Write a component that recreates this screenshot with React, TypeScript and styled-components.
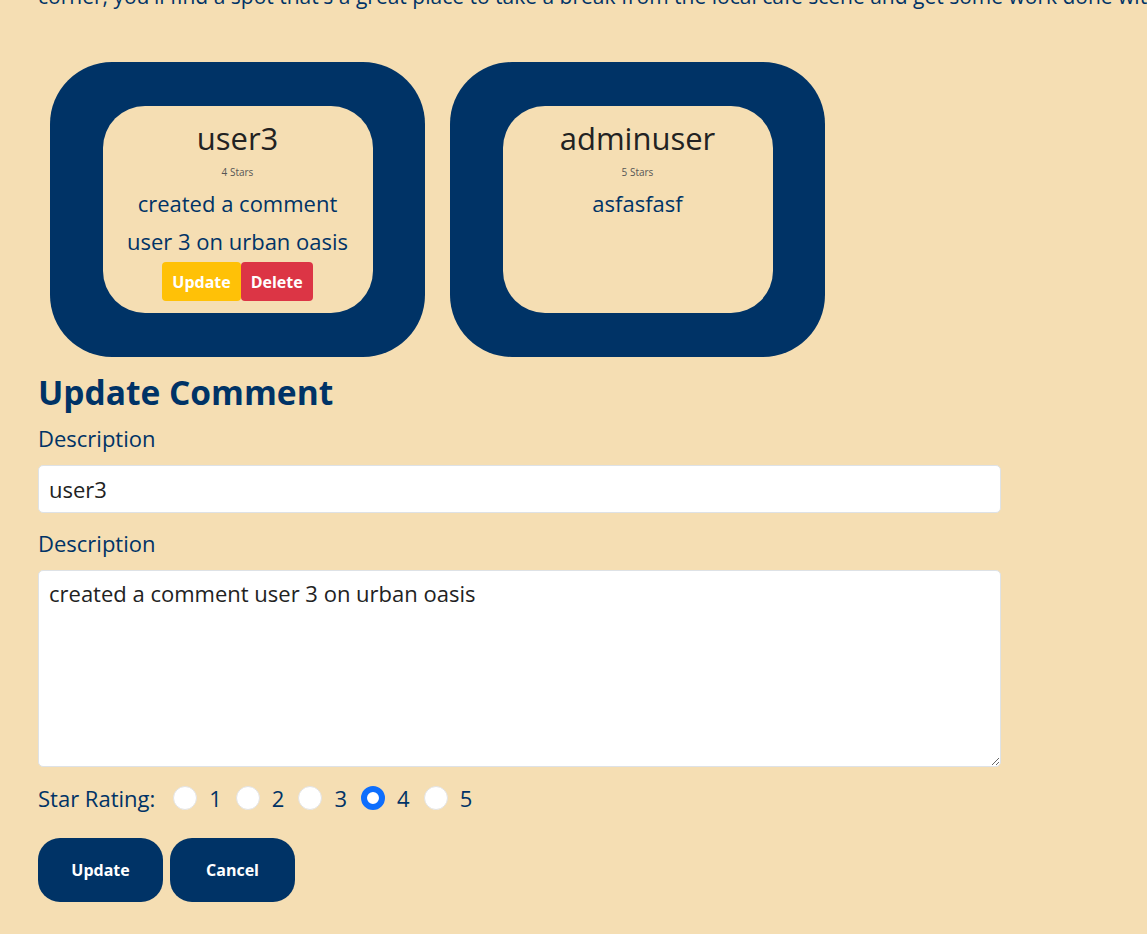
import React, { useState } from "react";
import styled, { createGlobalStyle } from "styled-components";

const GlobalStyle = createGlobalStyle`
  html, body { margin: 0; padding: 0; background: #f5deb3; }
  body { font-family: "Open Sans", "Noto Sans", sans-serif; overflow: hidden; }
  * { box-sizing: border-box; }
`;

const Page = styled.div`
  width: 1147px;
  height: 934px;
  overflow: hidden;
  padding: 0 38px;
  background: #f5deb3;
`;

const Intro = styled.p`
  margin: -17px 0 0;
  font-size: 21px;
  line-height: 26px;
  color: #003366;
  white-space: nowrap;
`;

const CardRow = styled.div`
  display: flex;
  gap: 25px;
  margin-top: 53px;
  padding-left: 12px;
`;

const OuterCard = styled.div`
  width: 375px;
  height: 295px;
  background: #003366;
  border-radius: 62px;
  display: flex;
  align-items: center;
  justify-content: center;
`;

const InnerCard = styled.div`
  width: 270px;
  height: 207px;
  background: #f5deb3;
  border-radius: 42px;
  display: flex;
  flex-direction: column;
  align-items: center;
  padding-top: 13px;
  text-align: center;
`;

const UserName = styled.div`
  font-size: 31px;
  line-height: 38px;
  color: #222222;
`;

const Stars = styled.div`
  font-size: 10px;
  line-height: 14px;
  color: #555555;
  margin-top: 8px;
`;

const CommentText = styled.div`
  font-size: 22px;
  line-height: 38px;
  color: #003366;
  margin-top: 5px;
  padding: 0 8px;
  white-space: pre-line;
`;

const SmallActions = styled.div`
  display: flex;
  margin-top: 2px;
`;

const SmallButton = styled.button<{ $tone: "warn" | "danger" }>`
  border: none;
  border-radius: 4px;
  height: 39px;
  padding: 0 10px;
  font-family: inherit;
  font-weight: 700;
  font-size: 16px;
  color: #ffffff;
  background: ${(p) => (p.$tone === "warn" ? "#ffc107" : "#dc3545")};
`;

const Form = styled.form`
  margin-top: 12px;
  width: 963px;
`;

const Heading = styled.h2`
  margin: 0;
  font-size: 33.5px;
  line-height: 46px;
  font-weight: 700;
  color: #003366;
`;

const Label = styled.label`
  display: block;
  font-size: 22px;
  line-height: 30px;
  color: #003366;
  margin-top: 8px;
  margin-bottom: 12px;
`;

const TextInput = styled.input`
  display: block;
  width: 100%;
  height: 48px;
  border: 1px solid #dee2e6;
  border-radius: 5px;
  background: #ffffff;
  padding: 0 10px;
  font-family: inherit;
  font-size: 22px;
  color: #222222;
  margin-bottom: 15px;
  outline: none;
`;

const TextArea = styled.textarea`
  display: block;
  width: 100%;
  height: 197px;
  border: 1px solid #dee2e6;
  border-radius: 5px;
  background: #ffffff;
  padding: 7px 10px;
  font-family: inherit;
  font-size: 22px;
  line-height: 30px;
  color: #222222;
  resize: vertical;
  outline: none;
`;

const RatingRow = styled.div`
  display: flex;
  align-items: center;
  margin-top: 16px;
  font-size: 22px;
  color: #003366;
  height: 30px;
`;

const RatingLabel = styled.span`
  margin-right: 18px;
`;

const RadioOption = styled.label`
  display: flex;
  align-items: center;
  gap: 12px;
  margin-right: 14px;
`;

const Radio = styled.input`
  appearance: none;
  -webkit-appearance: none;
  margin: 0;
  width: 24px;
  height: 24px;
  border-radius: 50%;
  background: #ffffff;
  border: 1px solid #e3e3e3;
  &:checked {
    background: #ffffff;
    border: 6px solid #0d6efd;
  }
`;

const MainActions = styled.div`
  display: flex;
  gap: 7px;
  margin-top: 25px;
`;

const BigButton = styled.button`
  width: 125px;
  height: 64px;
  border: none;
  border-radius: 22px;
  background: #003366;
  color: #ffffff;
  font-family: inherit;
  font-weight: 700;
  font-size: 16px;
`;

const comments = [
  {
    user: "user3",
    stars: 4,
    text: "created a comment\nuser 3 on urban oasis",
    mine: true,
  },
  { user: "adminuser", stars: 5, text: "asfasfasf", mine: false },
];

export default function App() {
  const [rating, setRating] = useState(4);
  return (
    <>
      <GlobalStyle />
      <Page>
        <Intro>
          corner, you'll find a spot that's a great place to take a break from the local cafe scene and get some work done with a cup of coffee.
        </Intro>
        <CardRow>
          {comments.map((c) => (
            <OuterCard key={c.user}>
              <InnerCard>
                <UserName>{c.user}</UserName>
                <Stars>{c.stars} Stars</Stars>
                <CommentText>{c.text}</CommentText>
                {c.mine && (
                  <SmallActions>
                    <SmallButton type="button" $tone="warn">Update</SmallButton>
                    <SmallButton type="button" $tone="danger">Delete</SmallButton>
                  </SmallActions>
                )}
              </InnerCard>
            </OuterCard>
          ))}
        </CardRow>
        <Form onSubmit={(e) => e.preventDefault()}>
          <Heading>Update Comment</Heading>
          <Label>Description</Label>
          <TextInput defaultValue="user3" />
          <Label>Description</Label>
          <TextArea defaultValue="created a comment user 3 on urban oasis" />
          <RatingRow>
            <RatingLabel>Star Rating:</RatingLabel>
            {[1, 2, 3, 4, 5].map((n) => (
              <RadioOption key={n}>
                <Radio
                  type="radio"
                  name="rating"
                  checked={rating === n}
                  onChange={() => setRating(n)}
                />
                {n}
              </RadioOption>
            ))}
          </RatingRow>
          <MainActions>
            <BigButton type="submit">Update</BigButton>
            <BigButton type="button">Cancel</BigButton>
          </MainActions>
        </Form>
      </Page>
    </>
  );
}
